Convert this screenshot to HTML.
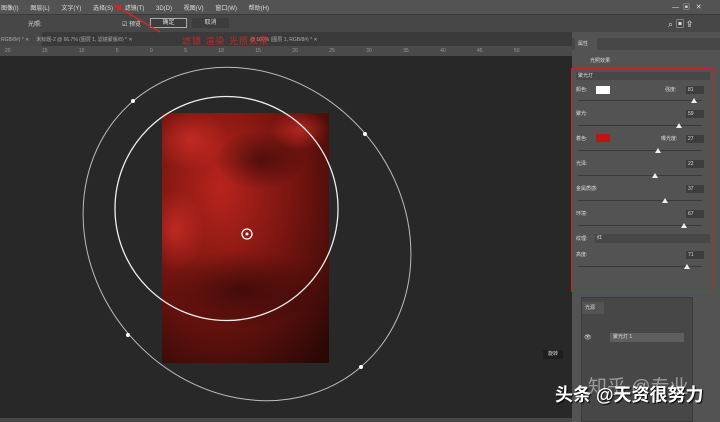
<!DOCTYPE html><html><head><meta charset="utf-8"><style>
*{margin:0;padding:0;box-sizing:border-box}
html,body{width:720px;height:422px;overflow:hidden}
body{background:#282828;font-family:"Liberation Sans","Noto Sans CJK SC",sans-serif;font-size:7px;color:#ccc;position:relative}
.a{position:absolute}
.menu{left:0;top:0;width:720px;height:14px;background:#535353}
.opts{left:0;top:14px;width:720px;height:18px;background:#474747;border-top:1px solid #3a3a3a}
.tabs{left:0;top:32px;width:572px;height:14px;background:#3a3a3a}
.ruler{left:0;top:46px;width:572px;height:10px;background:#4a4a4a;color:#999;font-size:5px}
.panel{left:572px;top:32px;width:148px;height:390px;background:#535353}
.inp{background:#3d3d3d;color:#ddd;font-size:5px;padding-left:2px;line-height:8px;height:8px;width:18px}
.sl{height:1px;background:#3a3a3a;width:124px;left:578px}
.tri{width:0;height:0;border-left:3px solid transparent;border-right:3px solid transparent;border-bottom:5px solid #eee}
.lab{font-size:6px;color:#ddd}
</style></head><body>
<div class="a menu"><span class="a" style="left:1px;top:3px;font-size:6px;color:#ddd;white-space:nowrap;word-spacing:10px">图像(I) 图层(L) 文字(Y) 选择(S) 滤镜(T) 3D(D) 视图(V) 窗口(W) 帮助(H)</span>
<span class="a" style="left:672px;top:2px;color:#ddd">—&nbsp;&nbsp;▣&nbsp;&nbsp;&nbsp;✕</span></div>
<div class="a opts">
<span class="a lab" style="left:28px;top:4px">光照:</span>
<span class="a lab" style="left:122px;top:4px">☑ 预览</span>
<div class="a" style="left:150px;top:3px;width:37px;height:10px;border:1px solid #aaa;background:#3d3d3d;color:#ddd;font-size:6px;text-align:center;line-height:8px">确定</div>
<div class="a" style="left:192px;top:3px;width:37px;height:10px;background:#3d3d3d;color:#ddd;font-size:6px;text-align:center;line-height:10px">取消</div>
<span class="a" style="left:668px;top:2px;color:#ddd;font-size:9px">⌕ ▣ ⇪</span></div>
<div class="a tabs"><div class="a" style="left:0;top:0;width:42px;height:14px;background:#474747"></div>
<span class="a" style="left:1px;top:4px;font-size:5px;color:#aaa;white-space:nowrap">RGB/8#) * ✕&nbsp;&nbsp;&nbsp;&nbsp;&nbsp;未标题-2 @ 66.7% (图层 1, 滤镜蒙版/8) * ✕</span>
<span class="a" style="left:250px;top:4px;font-size:5px;color:#aaa;white-space:nowrap">@ 100% (图层 1, RGB/8#) * ✕</span>
<span class="a" style="left:182px;top:2px;font-size:9px;color:#c0282a;letter-spacing:1px">滤镜 渲染 光照效果</span></div>
<div class="a ruler"><span class="a" style="left:5px;top:2px;word-spacing:30px;white-space:nowrap">20 15 10 5 0 5 10 15 20 25 30 35 40 45 50</span></div>
<div class="a" style="left:0;top:418px;width:572px;height:4px;background:#474747"></div>
<svg class="a" style="left:0;top:0" width="720" height="422">
<line x1="160" y1="32" x2="116" y2="6" stroke="#d0282a" stroke-width="1.5"/>
<polygon points="113,4 122,6 118,11" fill="#d0282a"/>
<defs>
<radialGradient id="g" cx="0.35" cy="0.3" r="0.9"><stop offset="0" stop-color="#b8241c"/><stop offset="0.5" stop-color="#751410"/><stop offset="1" stop-color="#2a0806"/></radialGradient>
<radialGradient id="h" cx="0.5" cy="0.5" r="0.5"><stop offset="0" stop-color="#000" stop-opacity=".45"/><stop offset="1" stop-color="#000" stop-opacity="0"/></radialGradient>
<radialGradient id="k" cx="0.5" cy="0.5" r="0.5"><stop offset="0" stop-color="#e0342a" stop-opacity=".6"/><stop offset="1" stop-color="#e0342a" stop-opacity="0"/></radialGradient>
<clipPath id="c"><rect x="162" y="113" width="167" height="250"/></clipPath>
</defs>
<rect x="162" y="113" width="167" height="250" fill="url(#g)"/>
<g clip-path="url(#c)">
<ellipse cx="260" cy="160" rx="45" ry="30" fill="url(#h)"/>
<ellipse cx="240" cy="290" rx="80" ry="40" fill="url(#h)"/>
<ellipse cx="190" cy="140" rx="40" ry="30" fill="url(#k)"/>
<ellipse cx="175" cy="230" rx="30" ry="40" fill="url(#k)"/>
<ellipse cx="300" cy="130" rx="30" ry="20" fill="url(#k)"/>
</g>
<ellipse cx="226.5" cy="208.5" rx="111.5" ry="112" fill="none" stroke="#eee" stroke-width="1.3"/>
<ellipse cx="247" cy="234" rx="175" ry="155" transform="rotate(49 247 234)" fill="none" stroke="#bbb" stroke-width="1"/>
<g fill="#fff"><circle cx="133" cy="101" r="2"/><circle cx="365" cy="134" r="2"/><circle cx="128" cy="335" r="2"/><circle cx="361" cy="367" r="2"/><circle cx="247" cy="234" r="1.5"/></g>
<circle cx="247" cy="234" r="5" fill="none" stroke="#fff" stroke-width="1.3"/>
</svg>
<div class="a" style="left:543px;top:350px;width:20px;height:9px;background:#1e1e1e;color:#ddd;font-size:5px;line-height:9px;text-align:center">旋转</div>
<div class="a panel"></div>
<div class="a" style="left:572px;top:38px;width:148px;height:12px;background:#474747"></div>
<div class="a" style="left:575px;top:38px;width:22px;height:12px;background:#535353;color:#ddd;font-size:5px;line-height:12px;padding-left:3px">属性</div>
<span class="a lab" style="left:590px;top:57px;font-size:5px">光照效果</span>
<div class="a" style="left:571px;top:68px;width:143px;height:224px;border:1.5px solid #c0282a"></div>
<div class="a" style="left:576px;top:72px;width:134px;height:8px;background:#474747;color:#ddd;font-size:5px;line-height:8px;padding-left:2px">聚光灯</div>
<span class="a lab" style="left:576px;top:86px;font-size:5px">颜色:</span><div class="a" style="left:596px;top:86px;width:14px;height:8px;background:#fff"></div>
<span class="a lab" style="left:665px;top:86px;font-size:5px">强度:</span><div class="a inp" style="left:686px;top:86px">81</div>
<div class="a sl" style="top:100px"></div><div class="a tri" style="left:691px;top:98px"></div>
<span class="a lab" style="left:576px;top:110px;font-size:5px">聚光:</span><div class="a inp" style="left:686px;top:110px">59</div>
<div class="a sl" style="top:125px"></div><div class="a tri" style="left:676px;top:123px"></div>
<span class="a lab" style="left:576px;top:135px;font-size:5px">着色:</span><div class="a" style="left:596px;top:134px;width:14px;height:8px;background:#c01410"></div>
<span class="a lab" style="left:661px;top:135px;font-size:5px">曝光度:</span><div class="a inp" style="left:686px;top:135px">27</div>
<div class="a sl" style="top:150px"></div><div class="a tri" style="left:655px;top:148px"></div>
<span class="a lab" style="left:576px;top:160px;font-size:5px">光泽:</span><div class="a inp" style="left:686px;top:160px">22</div>
<div class="a sl" style="top:175px"></div><div class="a tri" style="left:652px;top:173px"></div>
<span class="a lab" style="left:576px;top:185px;font-size:5px">金属质感:</span><div class="a inp" style="left:686px;top:185px">37</div>
<div class="a sl" style="top:200px"></div><div class="a tri" style="left:662px;top:198px"></div>
<span class="a lab" style="left:576px;top:210px;font-size:5px">环境:</span><div class="a inp" style="left:686px;top:210px">67</div>
<div class="a sl" style="top:225px"></div><div class="a tri" style="left:681px;top:223px"></div>
<span class="a lab" style="left:576px;top:235px;font-size:5px">纹理:</span><div class="a" style="left:595px;top:234px;width:115px;height:9px;background:#474747;color:#ddd;font-size:5px;line-height:9px;padding-left:2px">红</div>
<span class="a lab" style="left:576px;top:251px;font-size:5px">高度:</span><div class="a inp" style="left:686px;top:251px">71</div>
<div class="a sl" style="top:266px"></div><div class="a tri" style="left:684px;top:264px"></div>
<div class="a" style="left:581px;top:297px;width:112px;height:125px;background:#474747;border:1px solid #3a3a3a"></div>
<div class="a" style="left:582px;top:302px;width:22px;height:12px;background:#535353;color:#ddd;font-size:5px;line-height:12px;padding-left:3px">光源</div>
<span class="a" style="left:584px;top:334px;color:#ddd;font-size:6px">👁</span>
<div class="a" style="left:610px;top:333px;width:74px;height:9px;background:#5e5e5e;color:#ddd;font-size:5px;line-height:9px;padding-left:3px">聚光灯 1</div>
<div class="a" style="left:588px;top:372px;font-size:19px;color:rgba(255,255,255,.45);white-space:nowrap">知乎 @专业</div>
<div class="a" style="left:555px;top:384px;font-size:18px;font-weight:bold;color:#fff;text-shadow:1px 1px 1px #000;white-space:nowrap;line-height:22px">头条 @天资很努力</div>
</body></html>
